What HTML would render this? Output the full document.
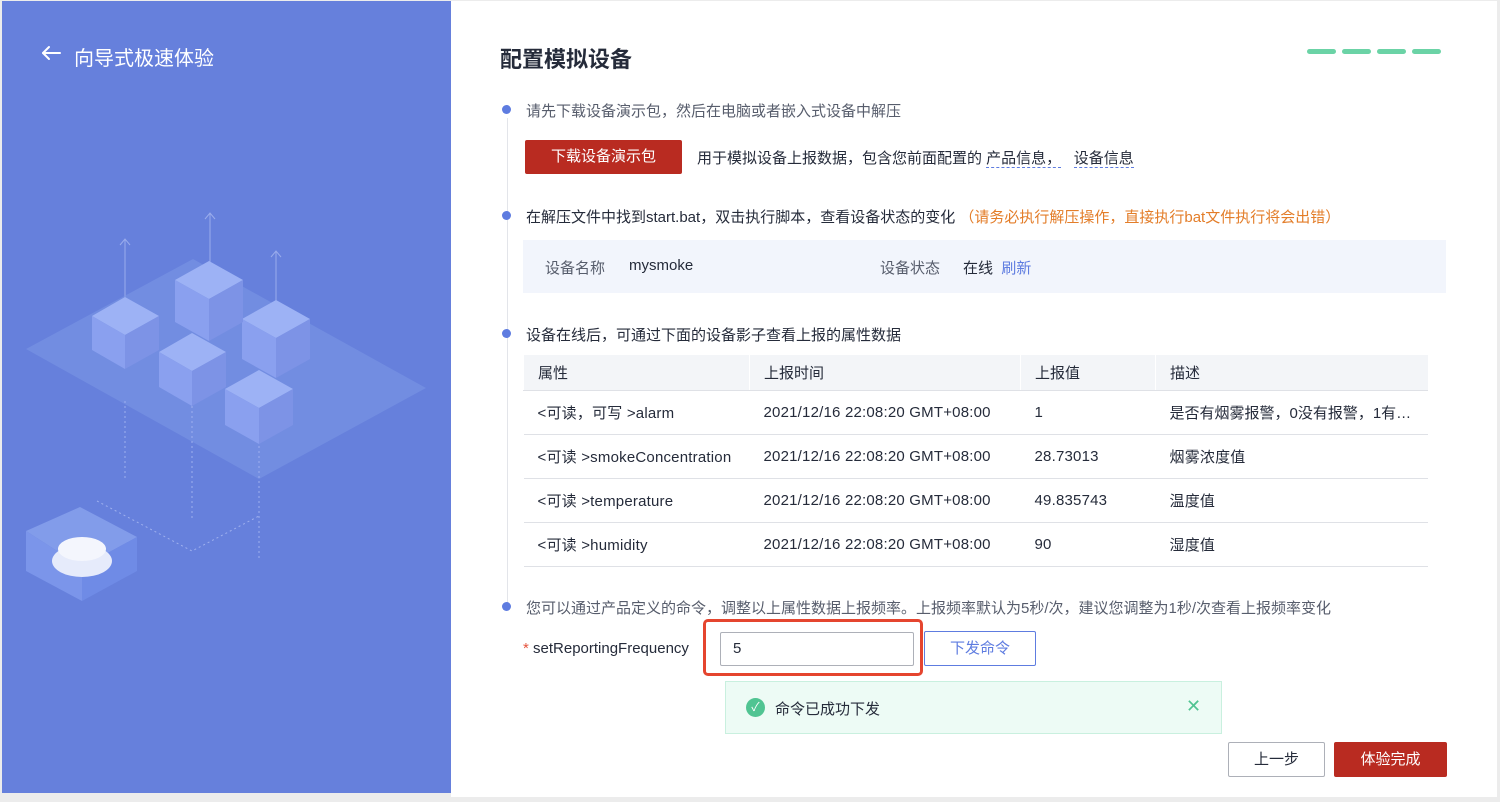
<!DOCTYPE html>
<html><head><meta charset="utf-8"><style>
*{margin:0;padding:0;box-sizing:border-box}
body{width:1500px;height:802px;background:#ececec;font-family:"Liberation Sans","Noto Sans CJK SC",sans-serif;position:relative;overflow:hidden;font-size:15px;color:#252b3a}
.left{position:absolute;left:2px;top:1px;width:449px;height:792px;background:#6680dc}
.right{position:absolute;left:451px;top:1px;width:1046px;height:796px;background:#fff}
.a{position:absolute;white-space:nowrap}
.dot{position:absolute;width:9px;height:9px;border-radius:50%;background:#5e7ce0}
.gray{color:#575d6c}
table{position:absolute;left:523px;top:355px;width:905px;border-collapse:collapse;font-size:15px}
td,th{height:44px;border-bottom:1px solid #dfe1e6;padding-left:14px;text-align:left;font-weight:normal;white-space:nowrap}
td{letter-spacing:.2px}
th{height:35px;background:#f3f5f8;color:#252b3a;border-left:1px solid #fff}
</style></head><body>
<div class="left">
<svg width="449" height="792" style="position:absolute;left:0;top:0">
<g stroke="#fff" stroke-width="2" fill="none" stroke-linecap="round" stroke-linejoin="round">
<line x1="41" y1="52" x2="58" y2="52"/><polyline points="47,46 41,52 47,58"/>
</g>
<g stroke="#a8b8f0" stroke-width="1" fill="none" opacity=".8">
<line x1="123" y1="238" x2="123" y2="300"/><polyline points="118,244 123,238 128,244"/>
<line x1="208" y1="212" x2="208" y2="280"/><polyline points="203,218 208,212 213,218"/>
<line x1="274" y1="250" x2="274" y2="320"/><polyline points="269,256 274,250 279,256"/>
</g>
<polygon points="24,348 191,258 424,387 257,478" fill="#7b97e6" opacity=".55"/>
<g fill="#9db2f5">
<polygon points="90,315 123,296 157,315 123,334"/><polygon points="173,279 207,260 241,279 207,298"/>
<polygon points="240,318 274,299 308,318 274,337"/><polygon points="157,351 190,332 224,351 190,370"/>
<polygon points="223,388 257,369 291,388 257,407"/>
</g>
<g fill="#8aa0ef">
<polygon points="90,315 123,334 123,368 90,349"/><polygon points="173,279 207,298 207,340 173,321"/>
<polygon points="240,318 274,337 274,377 240,358"/><polygon points="157,351 190,370 190,405 157,386"/>
<polygon points="223,388 257,407 257,443 223,424"/>
</g>
<g fill="#7d93e6">
<polygon points="123,334 157,315 157,349 123,368"/><polygon points="207,298 241,279 241,321 207,340"/>
<polygon points="274,337 308,318 308,358 274,377"/><polygon points="190,370 224,351 224,386 190,405"/>
<polygon points="257,407 291,388 291,424 257,443"/>
</g>
<g stroke="#9fb0ee" stroke-dasharray="2,3" fill="none">
<line x1="123" y1="400" x2="123" y2="480"/><line x1="190" y1="405" x2="190" y2="520"/><line x1="257" y1="445" x2="257" y2="560"/>
<polyline points="95,500 190,550 257,515"/>
</g>
<polygon points="24,530 78,506 135,536 80,566" fill="#8aa2ee" opacity=".8"/>
<polygon points="24,530 80,566 80,600 24,570" fill="#7b95ea"/>
<polygon points="80,566 135,536 135,570 80,600" fill="#6f8be6"/>
<ellipse cx="80" cy="560" rx="30" ry="16" fill="#e6ebfb"/>
<ellipse cx="80" cy="548" rx="24" ry="12" fill="#f4f6fd"/>
</svg>
<div class="a" style="left:72px;top:41px;font-size:20px;color:#fff">向导式极速体验</div>
</div>
<div class="right"></div>
<div class="a" style="left:500px;top:42px;font-size:22px;font-weight:bold;color:#252b3a">配置模拟设备</div>
<div class="a" style="left:1307px;top:49px;width:134px;height:5px;display:flex;gap:6px"><i style="flex:1;background:#6bd3a6;border-radius:3px"></i><i style="flex:1;background:#6bd3a6;border-radius:3px"></i><i style="flex:1;background:#6bd3a6;border-radius:3px"></i><i style="flex:1;background:#6bd3a6;border-radius:3px"></i></div>
<div class="a" style="left:507px;top:118px;width:1px;height:490px;background:#e3e5ea"></div>
<div class="dot" style="left:502px;top:105px"></div>
<div class="a gray" style="left:526px;top:100px">请先下载设备演示包，然后在电脑或者嵌入式设备中解压</div>
<div class="a" style="left:525px;top:140px;width:157px;height:34px;background:#b92b21;border-radius:2px;color:#fff;text-align:center;line-height:34px">下载设备演示包</div>
<div class="a" style="left:697px;top:147px">用于模拟设备上报数据，包含您前面配置的 <span style="border-bottom:1px dashed #5e7ce0">产品信息，</span>&nbsp;&nbsp;&nbsp;<span style="border-bottom:1px dashed #5e7ce0">设备信息</span></div>
<div class="dot" style="left:502px;top:211px"></div>
<div class="a" style="left:526px;top:206px">在解压文件中找到start.bat，双击执行脚本，查看设备状态的变化 <span style="color:#e37d29">（请务必执行解压操作，直接执行bat文件执行将会出错）</span></div>
<div class="a" style="left:523px;top:240px;width:923px;height:53px;background:#f2f5fc"></div>
<div class="a gray" style="left:545px;top:257px">设备名称</div>
<div class="a" style="left:629px;top:257px">mysmoke</div>
<div class="a gray" style="left:880px;top:257px">设备状态</div>
<div class="a" style="left:963px;top:257px">在线 &nbsp;<span style="color:#5e7ce0">刷新</span></div>
<div class="dot" style="left:502px;top:329px"></div>
<div class="a" style="left:526px;top:324px">设备在线后，可通过下面的设备影子查看上报的属性数据</div>
<table>
<tr><th style="width:226px">属性</th><th style="width:271px">上报时间</th><th style="width:135px">上报值</th><th>描述</th></tr>
<tr><td>&lt;可读，可写 &gt;alarm</td><td>2021/12/16 22:08:20 GMT+08:00</td><td>1</td><td style="letter-spacing:0">是否有烟雾报警，0没有报警，1有…</td></tr>
<tr><td>&lt;可读 &gt;smokeConcentration</td><td>2021/12/16 22:08:20 GMT+08:00</td><td>28.73013</td><td>烟雾浓度值</td></tr>
<tr><td>&lt;可读 &gt;temperature</td><td>2021/12/16 22:08:20 GMT+08:00</td><td>49.835743</td><td>温度值</td></tr>
<tr><td>&lt;可读 &gt;humidity</td><td>2021/12/16 22:08:20 GMT+08:00</td><td>90</td><td>湿度值</td></tr>
</table>
<div class="dot" style="left:502px;top:602px"></div>
<div class="a gray" style="left:526px;top:597px">您可以通过产品定义的命令，调整以上属性数据上报频率。上报频率默认为5秒/次，建议您调整为1秒/次查看上报频率变化</div>
<div class="a" style="left:523px;top:640px"><span style="color:#e5533c">*</span> setReportingFrequency</div>
<div class="a" style="left:703px;top:619px;width:220px;height:57px;border:3px solid #e5452f;border-radius:5px"></div>
<div class="a" style="left:720px;top:632px;width:194px;height:34px;border:1px solid #adb0b8;border-radius:2px;padding-left:12px;line-height:32px">5</div>
<div class="a" style="left:924px;top:631px;width:112px;height:35px;border:1px solid #5e7ce0;border-radius:2px;color:#5e7ce0;text-align:center;line-height:33px">下发命令</div>
<div class="a" style="left:725px;top:681px;width:497px;height:53px;background:#edfbf5;border:1px solid #c9f0df"></div>
<div class="a" style="left:746px;top:698px;width:19px;height:19px;border-radius:50%;background:#50c492;color:#fff;font-size:12px;text-align:center;line-height:19px">✓</div>
<div class="a" style="left:775px;top:698px">命令已成功下发</div>
<div class="a" style="left:1186px;top:696px;color:#50c492;font-size:18px">✕</div>
<div class="a" style="left:1228px;top:742px;width:97px;height:35px;border:1px solid #adb0b8;border-radius:2px;text-align:center;line-height:33px">上一步</div>
<div class="a" style="left:1334px;top:742px;width:113px;height:35px;background:#b92b21;border-radius:2px;color:#fff;text-align:center;line-height:35px">体验完成</div>
</body></html>
